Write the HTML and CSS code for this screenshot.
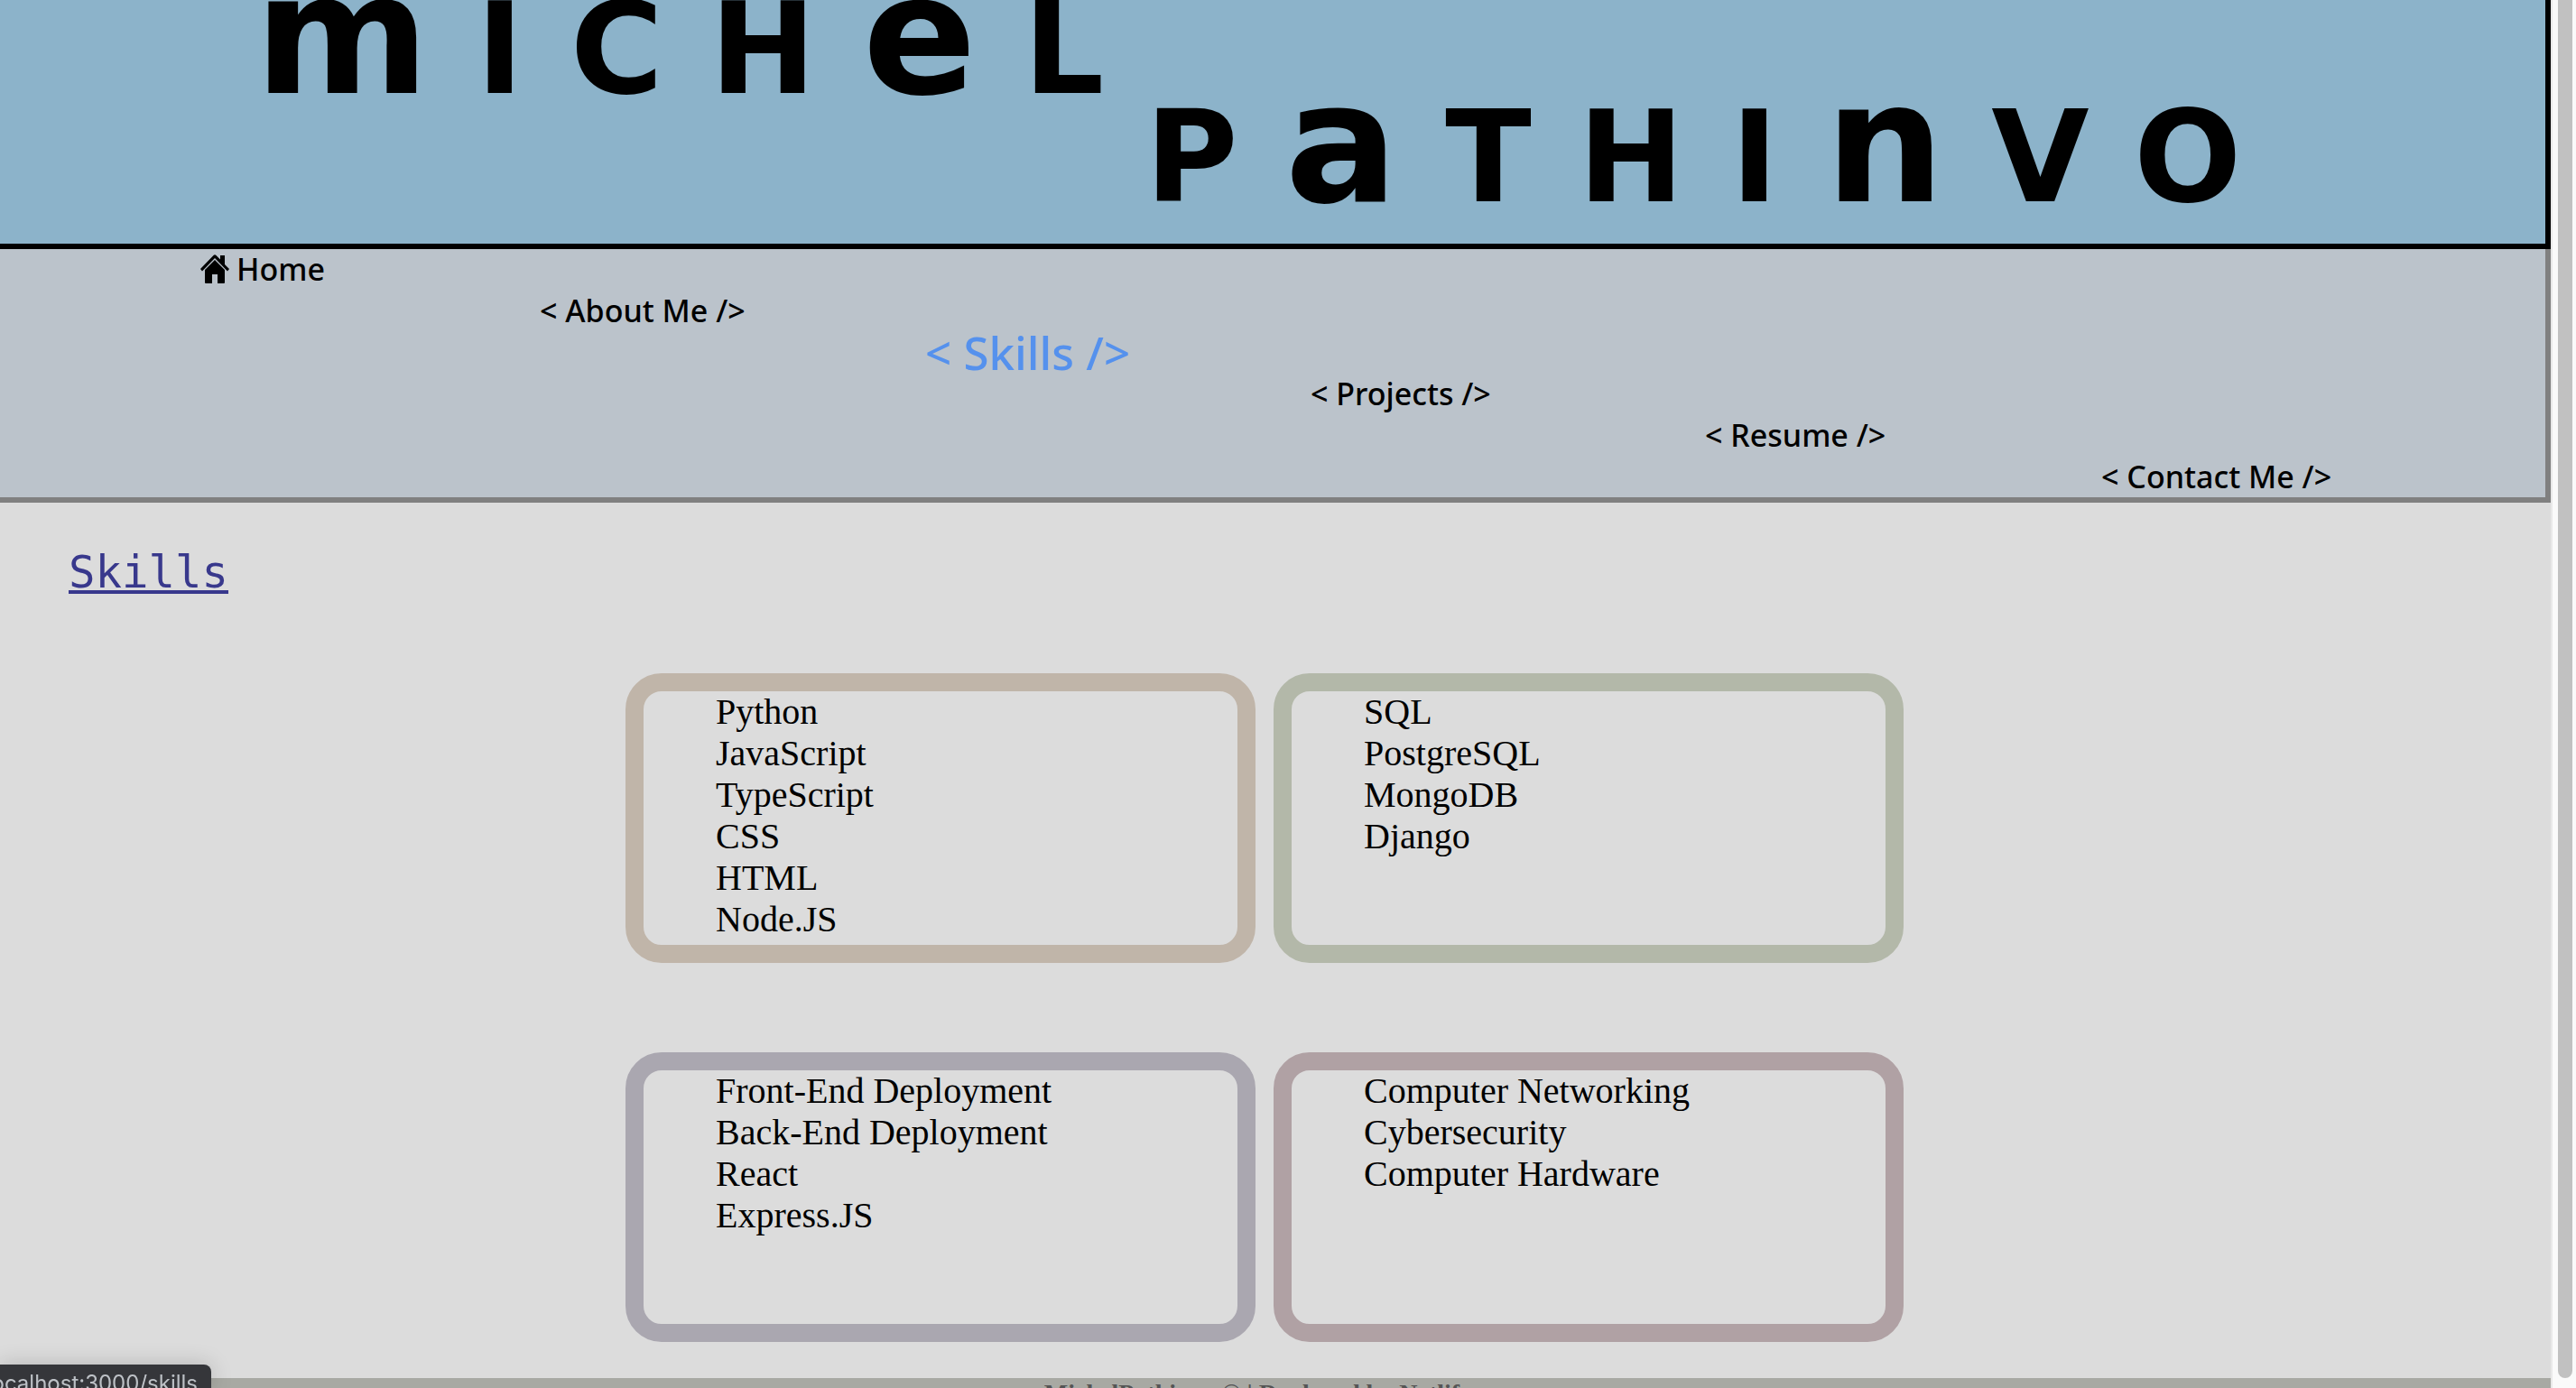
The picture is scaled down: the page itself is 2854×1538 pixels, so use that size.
FILE: index.html
```html
<!DOCTYPE html>
<html lang="en">
<head>
<meta charset="utf-8">
<title>Michel Pathinvo</title>
<link rel="stylesheet" href="styles.css">
</head>
<body>
<div class="page">
  <header class="banner">
    <h1 class="name">
      <span class="first"><span class="uni">m</span>ICH<span class="uni">e</span>L</span>
      <span class="last">P<span class="uni">a</span>THI<span class="uni">n</span>VO</span>
    </h1>
  </header>
  <nav class="menu">
    <a class="link" href="#home"><svg class="home" viewBox="0 0 32 34" aria-hidden="true"><path d="M16 7 27 18V32Q27 33 26 33H19V23H13V33H6Q5 33 5 32V18Z"/><path d="M0 17 14.500 2Q16 .5 17.500 2L22 6.500V2H27V12L32 17 30 19.500 16 5 2 19.500Z"/></svg>Home</a>
    <a class="link" href="#about">&lt; About Me /&gt;</a>
    <a class="link active" href="#skills">&lt; Skills /&gt;</a>
    <a class="link" href="#projects">&lt; Projects /&gt;</a>
    <a class="link" href="#resume">&lt; Resume /&gt;</a>
    <a class="link" href="#contact">&lt; Contact Me /&gt;</a>
  </nav>
  <main class="skills" id="skills">
    <h2 class="title">Skills</h2>
    <div class="cards">
      <ul class="card sand"><li>Python</li><li>JavaScript</li><li>TypeScript</li><li>CSS</li><li>HTML</li><li>Node.JS</li></ul>
      <ul class="card sage"><li>SQL</li><li>PostgreSQL</li><li>MongoDB</li><li>Django</li></ul>
      <ul class="card lilac"><li>Front-End Deployment</li><li>Back-End Deployment</li><li>React</li><li>Express.JS</li></ul>
      <ul class="card rose"><li>Computer Networking</li><li>Cybersecurity</li><li>Computer Hardware</li></ul>
    </div>
  </main>
  <footer class="footer">MichelPathinvo © | Deployed by Netlify</footer>
</div>
<div class="track"><div class="thumb"></div></div>
<div class="status">localhost:3000/skills</div>
</body>
</html>
```

FILE: styles.css
```css
* { box-sizing: border-box; }
body {
  margin: 0;
  display: flex;
  height: 100vh;
  overflow: hidden;
  background: #dcdcdc;
  color: #000;
}
.page { flex: 1; min-width: 0; }

.banner {
  padding-bottom: 40px;
  background: #8cb3ca;
  border: solid #000;
  border-width: 0 6px 6px 0;
}
.name {
  display: flex;
  flex-direction: column;
  gap: 10px;
  margin: 0;
  font: bold 140px/110px "DejaVu Sans", sans-serif;
  letter-spacing: 52px;
  white-space: nowrap;
}
.first { margin-left: 10%; }
.last { margin-left: 45%; }
/* lowercase letters stand as tall as the capitals */
.uni { font-size: 186px; line-height: 0; }

.menu {
  display: grid;
  grid-template-columns: 376fr 427fr 427fr 437fr 439fr 492fr;
  grid-auto-rows: 45px;
  row-gap: 1px;
  padding-left: 222px;
  background: #bbc3cb;
  border: solid #808080;
  border-width: 0 6px 6px 0;
  font: 500 34px/44px "Noto Sans", sans-serif;
}
.link {
  justify-self: start;
  color: inherit;
  text-decoration: none;
  white-space: nowrap;
}
.link:nth-child(1) { grid-area: 1 / 1; }
.link:nth-child(2) { grid-area: 2 / 2; }
.link:nth-child(3) { grid-area: 3 / 3; }
.link:nth-child(4) { grid-area: 4 / 4; }
.link:nth-child(5) { grid-area: 5 / 5; }
.link:nth-child(6) { grid-area: 6 / 6; }
.link.active { font-size: 51px; color: #5591ed; }
.home { width: 32px; height: 34px; margin-right: 8px; vertical-align: -4px; }

.skills { padding: 48px 24px 40px 0; }
.title {
  margin: 0 0 81px 76px;
  font: 49px/60px "DejaVu Sans Mono", monospace;
  color: #38388c;
  text-decoration: underline 4px;
  text-underline-offset: 3px;
}
.cards {
  display: grid;
  grid-template-columns: 1fr 1fr;
  gap: 99px 20px;
  width: min(1416px, 100%);
  margin: 0 auto;
}
.card {
  min-height: 321px;
  margin: 0;
  padding: 0 0 0 80px;
  border: 20px solid;
  border-radius: 40px;
  list-style: none;
  font: 40px/46px "Liberation Serif", serif;
}
.card li { color: #000; }
.sand { border-color: #c0b5a9; }
.sage { border-color: #b3b8a9; }
.lilac { border-color: #aaa7b0; }
.rose { border-color: #b0a1a4; }

.footer {
  padding-right: 38px;
  background: #a8a9a3;
  color: #555;
  text-align: center;
  font: bold 28px/34px "Liberation Serif", serif;
}

.track {
  width: 28px;
  padding: 0 4px 11px 6px;
  background: #fafafa;
  border-left: 2px solid #e8e8e8;
}
.thumb { height: 100%; background: #c1c1c1; border-radius: 0 0 8px 8px; }

.status {
  position: fixed;
  left: 0;
  bottom: 0;
  display: flex;
  justify-content: flex-end;
  width: 234px;
  height: 26px;
  padding: 6px 15px 0 0;
  overflow: hidden;
  border-top-right-radius: 8px;
  background: #35363a;
  box-shadow: 0 0 24px rgba(0, 0, 0, .18);
  color: #bdc1c6;
  font: 24px/30px Inter, sans-serif;
}
```
